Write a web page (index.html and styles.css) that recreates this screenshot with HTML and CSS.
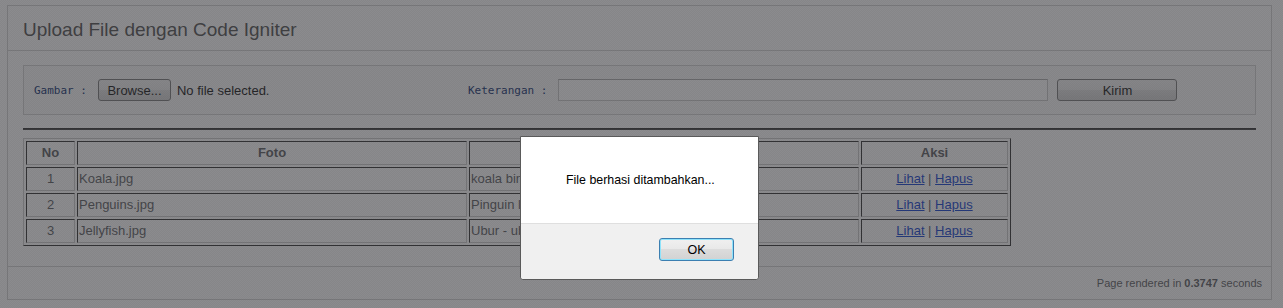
FILE: index.html
```html
<!DOCTYPE html>
<html lang="id">
<head>
    <meta charset="UTF-8">
    <title>Upload File dengan Code Igniter</title>
    <link rel="stylesheet" href="styles.css">
</head>
<body>

<div id="container">
    <h1>Upload File dengan Code Igniter</h1>

    <div id="body">
        <form class="upload-box">
            <div class="field field-file">
                <label class="code-label">Gambar :</label>
                <button type="button" class="win-button browse-button">Browse...</button>
                <span class="file-name">No file selected.</span>
            </div>
            <div class="field field-desc">
                <label class="code-label" for="keterangan">Keterangan :</label>
                <input type="text" id="keterangan" class="text-input">
                <button type="button" class="win-button send-button">Kirim</button>
            </div>
        </form>

        <hr class="divider">

        <table class="file-table">
            <thead>
                <tr>
                    <th class="col-no">No</th>
                    <th class="col-foto">Foto</th>
                    <th class="col-ket">Keterangan</th>
                    <th class="col-aksi">Aksi</th>
                </tr>
            </thead>
            <tbody>
                <tr>
                    <td class="center">1</td>
                    <td>Koala.jpg</td>
                    <td>koala binatang</td>
                    <td class="center"><a href="#">Lihat</a> | <a href="#">Hapus</a></td>
                </tr>
                <tr>
                    <td class="center">2</td>
                    <td>Penguins.jpg</td>
                    <td>Pinguin lucu</td>
                    <td class="center"><a href="#">Lihat</a> | <a href="#">Hapus</a></td>
                </tr>
                <tr>
                    <td class="center">3</td>
                    <td>Jellyfish.jpg</td>
                    <td>Ubur - ubur</td>
                    <td class="center"><a href="#">Lihat</a> | <a href="#">Hapus</a></td>
                </tr>
            </tbody>
        </table>
    </div>

    <p class="footer">Page rendered in <strong>0.3747</strong> seconds</p>
</div>

<!-- alert yang muncul setelah upload -->
<div class="modal-backdrop"></div>
<div class="alert-box">
    <div class="alert-message">File berhasi ditambahkan...</div>
    <div class="alert-footer">
        <button type="button" class="ok-button">OK</button>
    </div>
</div>

</body>
</html>
```

FILE: styles.css
```css
body {
    margin: 0;
    background-color: #fff;
    font: 13px "Liberation Sans", Arial, sans-serif;
    color: #4F5155;
}

#container {
    margin: 5px 11px 8px 7px;
    border: 1px solid #D0D0D0;
}

h1 {
    color: #444;
    font-size: 19px;
    font-weight: normal;
    line-height: 22px;
    margin: 0 0 14px 0;
    padding: 13px 15px 9px 15px;
    border-bottom: 1px solid #D0D0D0;
}

#body {
    margin: 0 15px;
}

/* form upload */
.upload-box {
    display: flex;
    align-items: center;
    height: 24px;
    padding: 12px 10px;
    margin: 0 0 13px 0;
    background-color: #f9f9f9;
    border: 1px solid #D0D0D0;
}

.field {
    display: flex;
    align-items: center;
}

.field-file {
    width: 434px;
}

.code-label {
    font-family: "DejaVu Sans Mono", "Liberation Mono", monospace;
    font-size: 11px;
    color: #002166;
    margin-right: 11px;
    white-space: pre;
}

.win-button {
    box-sizing: border-box;
    height: 22px;
    padding: 0;
    font: 13px "Liberation Sans", Arial, sans-serif;
    color: #000;
    border: 1px solid #707070;
    border-radius: 3px;
    background: linear-gradient(#f2f2f2, #ebebeb 50%, #dddddd 50%, #cfcfcf);
}

.browse-button {
    width: 73px;
}

.file-name {
    margin-left: 6px;
    color: #000;
}

.text-input {
    box-sizing: border-box;
    width: 490px;
    height: 22px;
    margin: 0;
    border: 1px solid #c5c5c5;
    border-top-color: #a8a8a8;
    background-color: #fff;
}

.send-button {
    width: 120px;
    margin-left: 9px;
}

.divider {
    height: 0;
    margin: 0 0 8px 0;
    border: 0;
    border-top: 1px solid #222;
    border-bottom: 1px solid #333;
}

/* tabel file */
.file-table {
    table-layout: fixed;
    width: 988px;
    border-spacing: 2px;
    border: 1px solid;
    border-color: #c8c8c8 #222 #222 #c8c8c8;
}

.file-table th,
.file-table td {
    box-sizing: border-box;
    height: 24px;
    padding: 1px;
    line-height: 20px;
    text-align: left;
    border: 1px solid;
    border-color: #222 #c8c8c8 #c8c8c8 #222;
    white-space: nowrap;
    overflow: hidden;
}

.file-table th {
    text-align: center;
    font-weight: bold;
}

.col-no { width: 49px; }
.col-foto { width: 390px; }
.col-ket { width: 390px; }
.col-aksi { width: 147px; }

.file-table td.center {
    text-align: center;
}

.file-table a {
    color: #0033cc;
}

.footer {
    text-align: right;
    font-size: 11px;
    border-top: 1px solid #D0D0D0;
    line-height: 32px;
    padding: 0 9px 0 10px;
    margin: 20px 0 0 0;
}

/* overlay alert */
.modal-backdrop {
    position: fixed;
    top: 0;
    left: 0;
    right: 0;
    bottom: 0;
    background-color: rgba(62, 62, 66, 0.6);
    background-image: repeating-conic-gradient(rgba(0, 0, 0, 0.04) 0 25%, transparent 0 50%);
    background-size: 2px 2px;
}

.alert-box {
    position: absolute;
    left: 520px;
    top: 136px;
    width: 237px;
    border: 1px solid #5a5a5a;
    border-radius: 0 0 3px 3px;
    background-color: #fff;
    font-family: "Liberation Sans", Arial, sans-serif;
}

.alert-message {
    height: 86px;
    padding-left: 45px;
    display: flex;
    align-items: center;
    font-size: 12.4px;
    color: #000;
}

.alert-footer {
    display: flex;
    justify-content: flex-end;
    padding: 14px 24px 18px 0;
    background-color: #f0f0f0;
    border-top: 1px solid #dfdfdf;
    border-radius: 0 0 3px 3px;
}

.ok-button {
    box-sizing: border-box;
    width: 75px;
    height: 23px;
    padding: 0;
    font: 12.5px "Liberation Sans", Arial, sans-serif;
    color: #000;
    border: 1px solid #3c7fb1;
    border-radius: 3px;
    box-shadow: inset 0 0 0 1px #8ee3fb;
    background: linear-gradient(#f0f0f0, #e8e8e8 50%, #dcdcdc 50%, #d2d2d2);
}
```
